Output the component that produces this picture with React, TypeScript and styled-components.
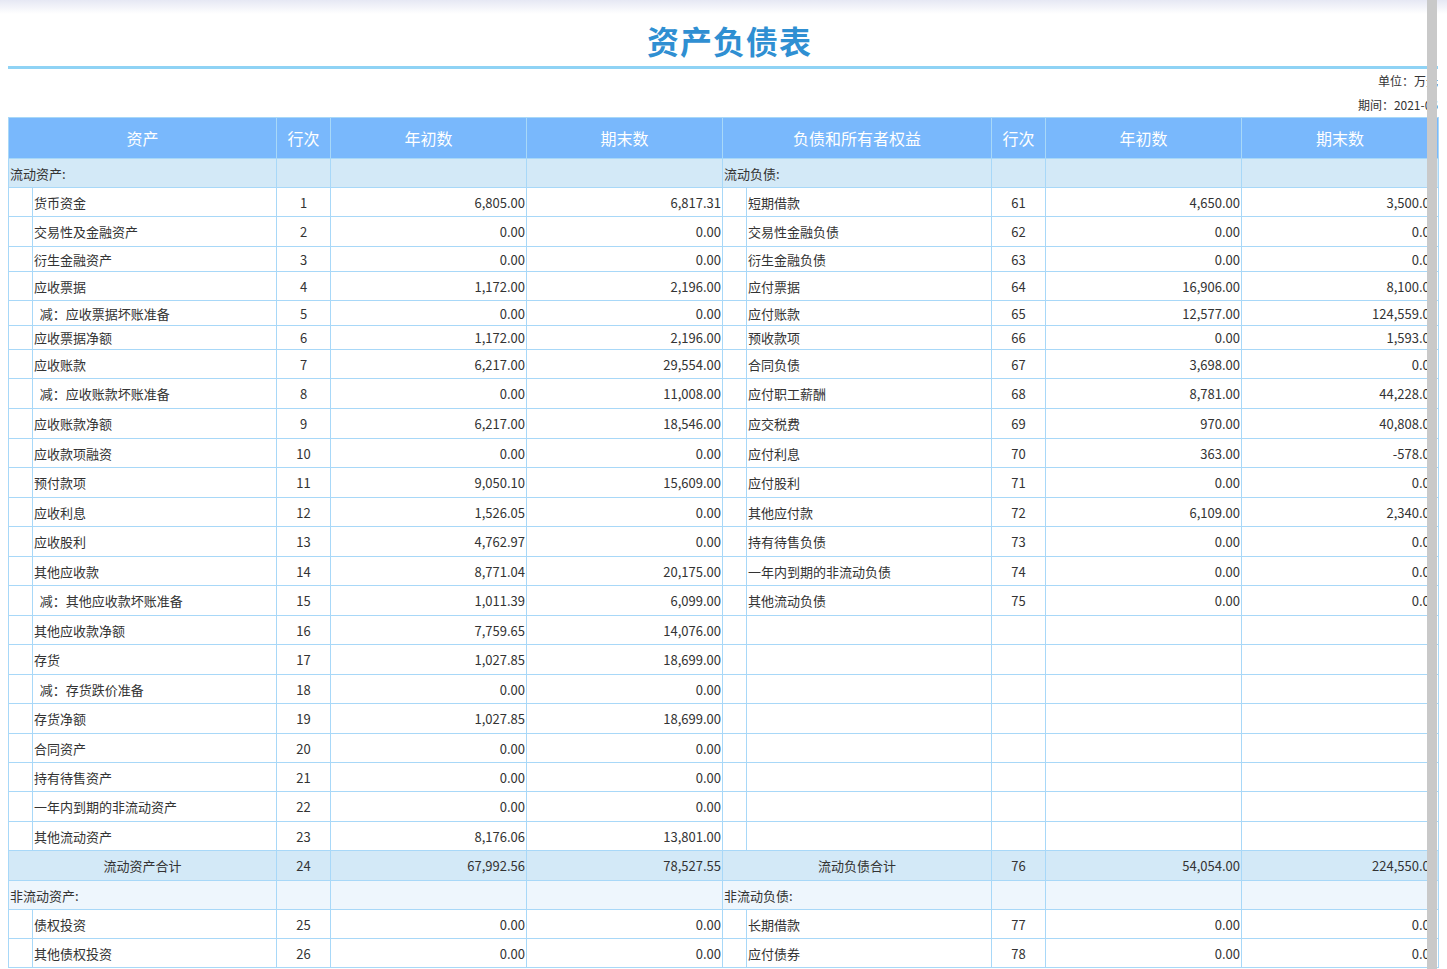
import React from "react";
import styled, { createGlobalStyle } from "styled-components";

const Global = createGlobalStyle`
  html, body { margin: 0; padding: 0; background: #fff; }
  body { font-family: "Noto Sans CJK SC", "Noto Sans", sans-serif; color: #333; overflow: hidden; }
`;

const Page = styled.div`
  position: relative;
  width: 1447px;
  height: 969px;
  overflow: hidden;
`;
const TopShade = styled.div`
  height: 14px;
  background: linear-gradient(#e6e8f4, #ffffff);
`;
const Title = styled.h1`
  margin: 0;
  height: 52px;
  line-height: 52px;
  text-align: center;
  font-size: 32px;
  font-weight: 700;
  color: #2f8fd2;
  padding-left: 12px;
  letter-spacing: 1px;
`;
const Rule = styled.div`
  margin: 0 9px 0 8px;
  height: 3px;
  background: #8fd3f5;
`;
const Meta = styled.div`
  margin-right: 9px;
  text-align: right;
  font-size: 12px;
  height: 24px;
  line-height: 20px;
  padding-top: 2px;
  box-sizing: border-box;
  white-space: nowrap;
`;
const Table = styled.table`
  margin: 0 9px 0 8px;
  width: 1430px;
  border-collapse: collapse;
  table-layout: fixed;
  font-size: 13px;
`;
const Th = styled.th`
  height: 38px;
  background: #79b8fc;
  color: #fff;
  font-weight: 400;
  font-size: 16px;
  border: 1px solid #a8d8f8;
`;
const Td = styled.td<{ $align?: string; $bg?: string }>`
  border: 1px solid #a8d8f8;
  text-align: ${(p) => p.$align || "left"};
  background: ${(p) => p.$bg || "#fff"};
  padding: 0 1px;
  white-space: nowrap;
  overflow: hidden;
`;
const Scroll = styled.div`
  position: absolute;
  top: 0;
  right: 10px;
  width: 10px;
  height: 969px;
  background: #c9c9c9;
`;

type R = { h: number; kind?: "sec" | "sec2" | "total"; a?: string; ai?: boolean; an?: string; a1?: string; a2?: string; l?: string; li?: boolean; ln?: string; l1?: string; l2?: string };

const rows: R[] = [
  { h: 29, kind: "sec", a: "流动资产:", l: "流动负债:" },
  { h: 29, a: "货币资金", an: "1", a1: "6,805.00", a2: "6,817.31", l: "短期借款", ln: "61", l1: "4,650.00", l2: "3,500.00" },
  { h: 30, a: "交易性及金融资产", an: "2", a1: "0.00", a2: "0.00", l: "交易性金融负债", ln: "62", l1: "0.00", l2: "0.00" },
  { h: 25, a: "衍生金融资产", an: "3", a1: "0.00", a2: "0.00", l: "衍生金融负债", ln: "63", l1: "0.00", l2: "0.00" },
  { h: 29, a: "应收票据", an: "4", a1: "1,172.00", a2: "2,196.00", l: "应付票据", ln: "64", l1: "16,906.00", l2: "8,100.00" },
  { h: 25, a: "减：应收票据坏账准备", ai: true, an: "5", a1: "0.00", a2: "0.00", l: "应付账款", ln: "65", l1: "12,577.00", l2: "124,559.00" },
  { h: 24, a: "应收票据净额", an: "6", a1: "1,172.00", a2: "2,196.00", l: "预收款项", ln: "66", l1: "0.00", l2: "1,593.00" },
  { h: 29, a: "应收账款", an: "7", a1: "6,217.00", a2: "29,554.00", l: "合同负债", ln: "67", l1: "3,698.00", l2: "0.00" },
  { h: 30, a: "减：应收账款坏账准备", ai: true, an: "8", a1: "0.00", a2: "11,008.00", l: "应付职工薪酬", ln: "68", l1: "8,781.00", l2: "44,228.00" },
  { h: 30, a: "应收账款净额", an: "9", a1: "6,217.00", a2: "18,546.00", l: "应交税费", ln: "69", l1: "970.00", l2: "40,808.00" },
  { h: 29, a: "应收款项融资", an: "10", a1: "0.00", a2: "0.00", l: "应付利息", ln: "70", l1: "363.00", l2: "-578.00" },
  { h: 30, a: "预付款项", an: "11", a1: "9,050.10", a2: "15,609.00", l: "应付股利", ln: "71", l1: "0.00", l2: "0.00" },
  { h: 29, a: "应收利息", an: "12", a1: "1,526.05", a2: "0.00", l: "其他应付款", ln: "72", l1: "6,109.00", l2: "2,340.00" },
  { h: 30, a: "应收股利", an: "13", a1: "4,762.97", a2: "0.00", l: "持有待售负债", ln: "73", l1: "0.00", l2: "0.00" },
  { h: 29, a: "其他应收款", an: "14", a1: "8,771.04", a2: "20,175.00", l: "一年内到期的非流动负债", ln: "74", l1: "0.00", l2: "0.00" },
  { h: 30, a: "减：其他应收款坏账准备", ai: true, an: "15", a1: "1,011.39", a2: "6,099.00", l: "其他流动负债", ln: "75", l1: "0.00", l2: "0.00" },
  { h: 29, a: "其他应收款净额", an: "16", a1: "7,759.65", a2: "14,076.00" },
  { h: 30, a: "存货", an: "17", a1: "1,027.85", a2: "18,699.00" },
  { h: 29, a: "减：存货跌价准备", ai: true, an: "18", a1: "0.00", a2: "0.00" },
  { h: 30, a: "存货净额", an: "19", a1: "1,027.85", a2: "18,699.00" },
  { h: 29, a: "合同资产", an: "20", a1: "0.00", a2: "0.00" },
  { h: 29, a: "持有待售资产", an: "21", a1: "0.00", a2: "0.00" },
  { h: 30, a: "一年内到期的非流动资产", an: "22", a1: "0.00", a2: "0.00" },
  { h: 29, a: "其他流动资产", an: "23", a1: "8,176.06", a2: "13,801.00" },
  { h: 30, kind: "total", a: "流动资产合计", an: "24", a1: "67,992.56", a2: "78,527.55", l: "流动负债合计", ln: "76", l1: "54,054.00", l2: "224,550.00" },
  { h: 29, kind: "sec2", a: "非流动资产:", l: "非流动负债:" },
  { h: 29, a: "债权投资", an: "25", a1: "0.00", a2: "0.00", l: "长期借款", ln: "77", l1: "0.00", l2: "0.00" },
  { h: 29, a: "其他债权投资", an: "26", a1: "0.00", a2: "0.00", l: "应付债券", ln: "78", l1: "0.00", l2: "0.00" },
];

const Name = ({ t, ind }: { t?: string; ind?: boolean }) => <>{ind ? "\u00a0\u00a0" + (t || "") : t}</>;

export default function App() {
  return (
    <Page>
      <Global />
      <TopShade />
      <Title>资产负债表</Title>
      <Rule />
      <Meta>单位：万元</Meta>
      <Meta>期间：2021-06</Meta>
      <Table>
        <colgroup>
          <col style={{ width: 24 }} /><col style={{ width: 244 }} /><col style={{ width: 54 }} /><col style={{ width: 196 }} /><col style={{ width: 196 }} />
          <col style={{ width: 24 }} /><col style={{ width: 245 }} /><col style={{ width: 54 }} /><col style={{ width: 196 }} /><col style={{ width: 197 }} />
        </colgroup>
        <thead>
          <tr>
            <Th colSpan={2}>资产</Th><Th>行次</Th><Th>年初数</Th><Th>期末数</Th>
            <Th colSpan={2}>负债和所有者权益</Th><Th>行次</Th><Th>年初数</Th><Th>期末数</Th>
          </tr>
        </thead>
        <tbody>
          {rows.map((r, i) => {
            const bg = r.kind === "sec" || r.kind === "total" ? "#d3e9f7" : r.kind === "sec2" ? "#eef6fd" : undefined;
            if (r.kind === "sec" || r.kind === "sec2") {
              return (
                <tr key={i} style={{ height: r.h }}>
                  <Td colSpan={2} $bg={bg}>{r.a}</Td><Td $bg={bg} /><Td $bg={bg} /><Td $bg={bg} />
                  <Td colSpan={2} $bg={bg}>{r.l}</Td><Td $bg={bg} /><Td $bg={bg} /><Td $bg={bg} />
                </tr>
              );
            }
            if (r.kind === "total") {
              return (
                <tr key={i} style={{ height: r.h }}>
                  <Td colSpan={2} $align="center" $bg={bg}>{r.a}</Td><Td $align="center" $bg={bg}>{r.an}</Td><Td $align="right" $bg={bg}>{r.a1}</Td><Td $align="right" $bg={bg}>{r.a2}</Td>
                  <Td colSpan={2} $align="center" $bg={bg}>{r.l}</Td><Td $align="center" $bg={bg}>{r.ln}</Td><Td $align="right" $bg={bg}>{r.l1}</Td><Td $align="right" $bg={bg}>{r.l2}</Td>
                </tr>
              );
            }
            return (
              <tr key={i} style={{ height: r.h }}>
                <Td /><Td><Name t={r.a} ind={r.ai} /></Td><Td $align="center">{r.an}</Td><Td $align="right">{r.a1}</Td><Td $align="right">{r.a2}</Td>
                <Td /><Td><Name t={r.l} ind={r.li} /></Td><Td $align="center">{r.ln}</Td><Td $align="right">{r.l1}</Td><Td $align="right">{r.l2}</Td>
              </tr>
            );
          })}
        </tbody>
      </Table>
      <Scroll />
    </Page>
  );
}
